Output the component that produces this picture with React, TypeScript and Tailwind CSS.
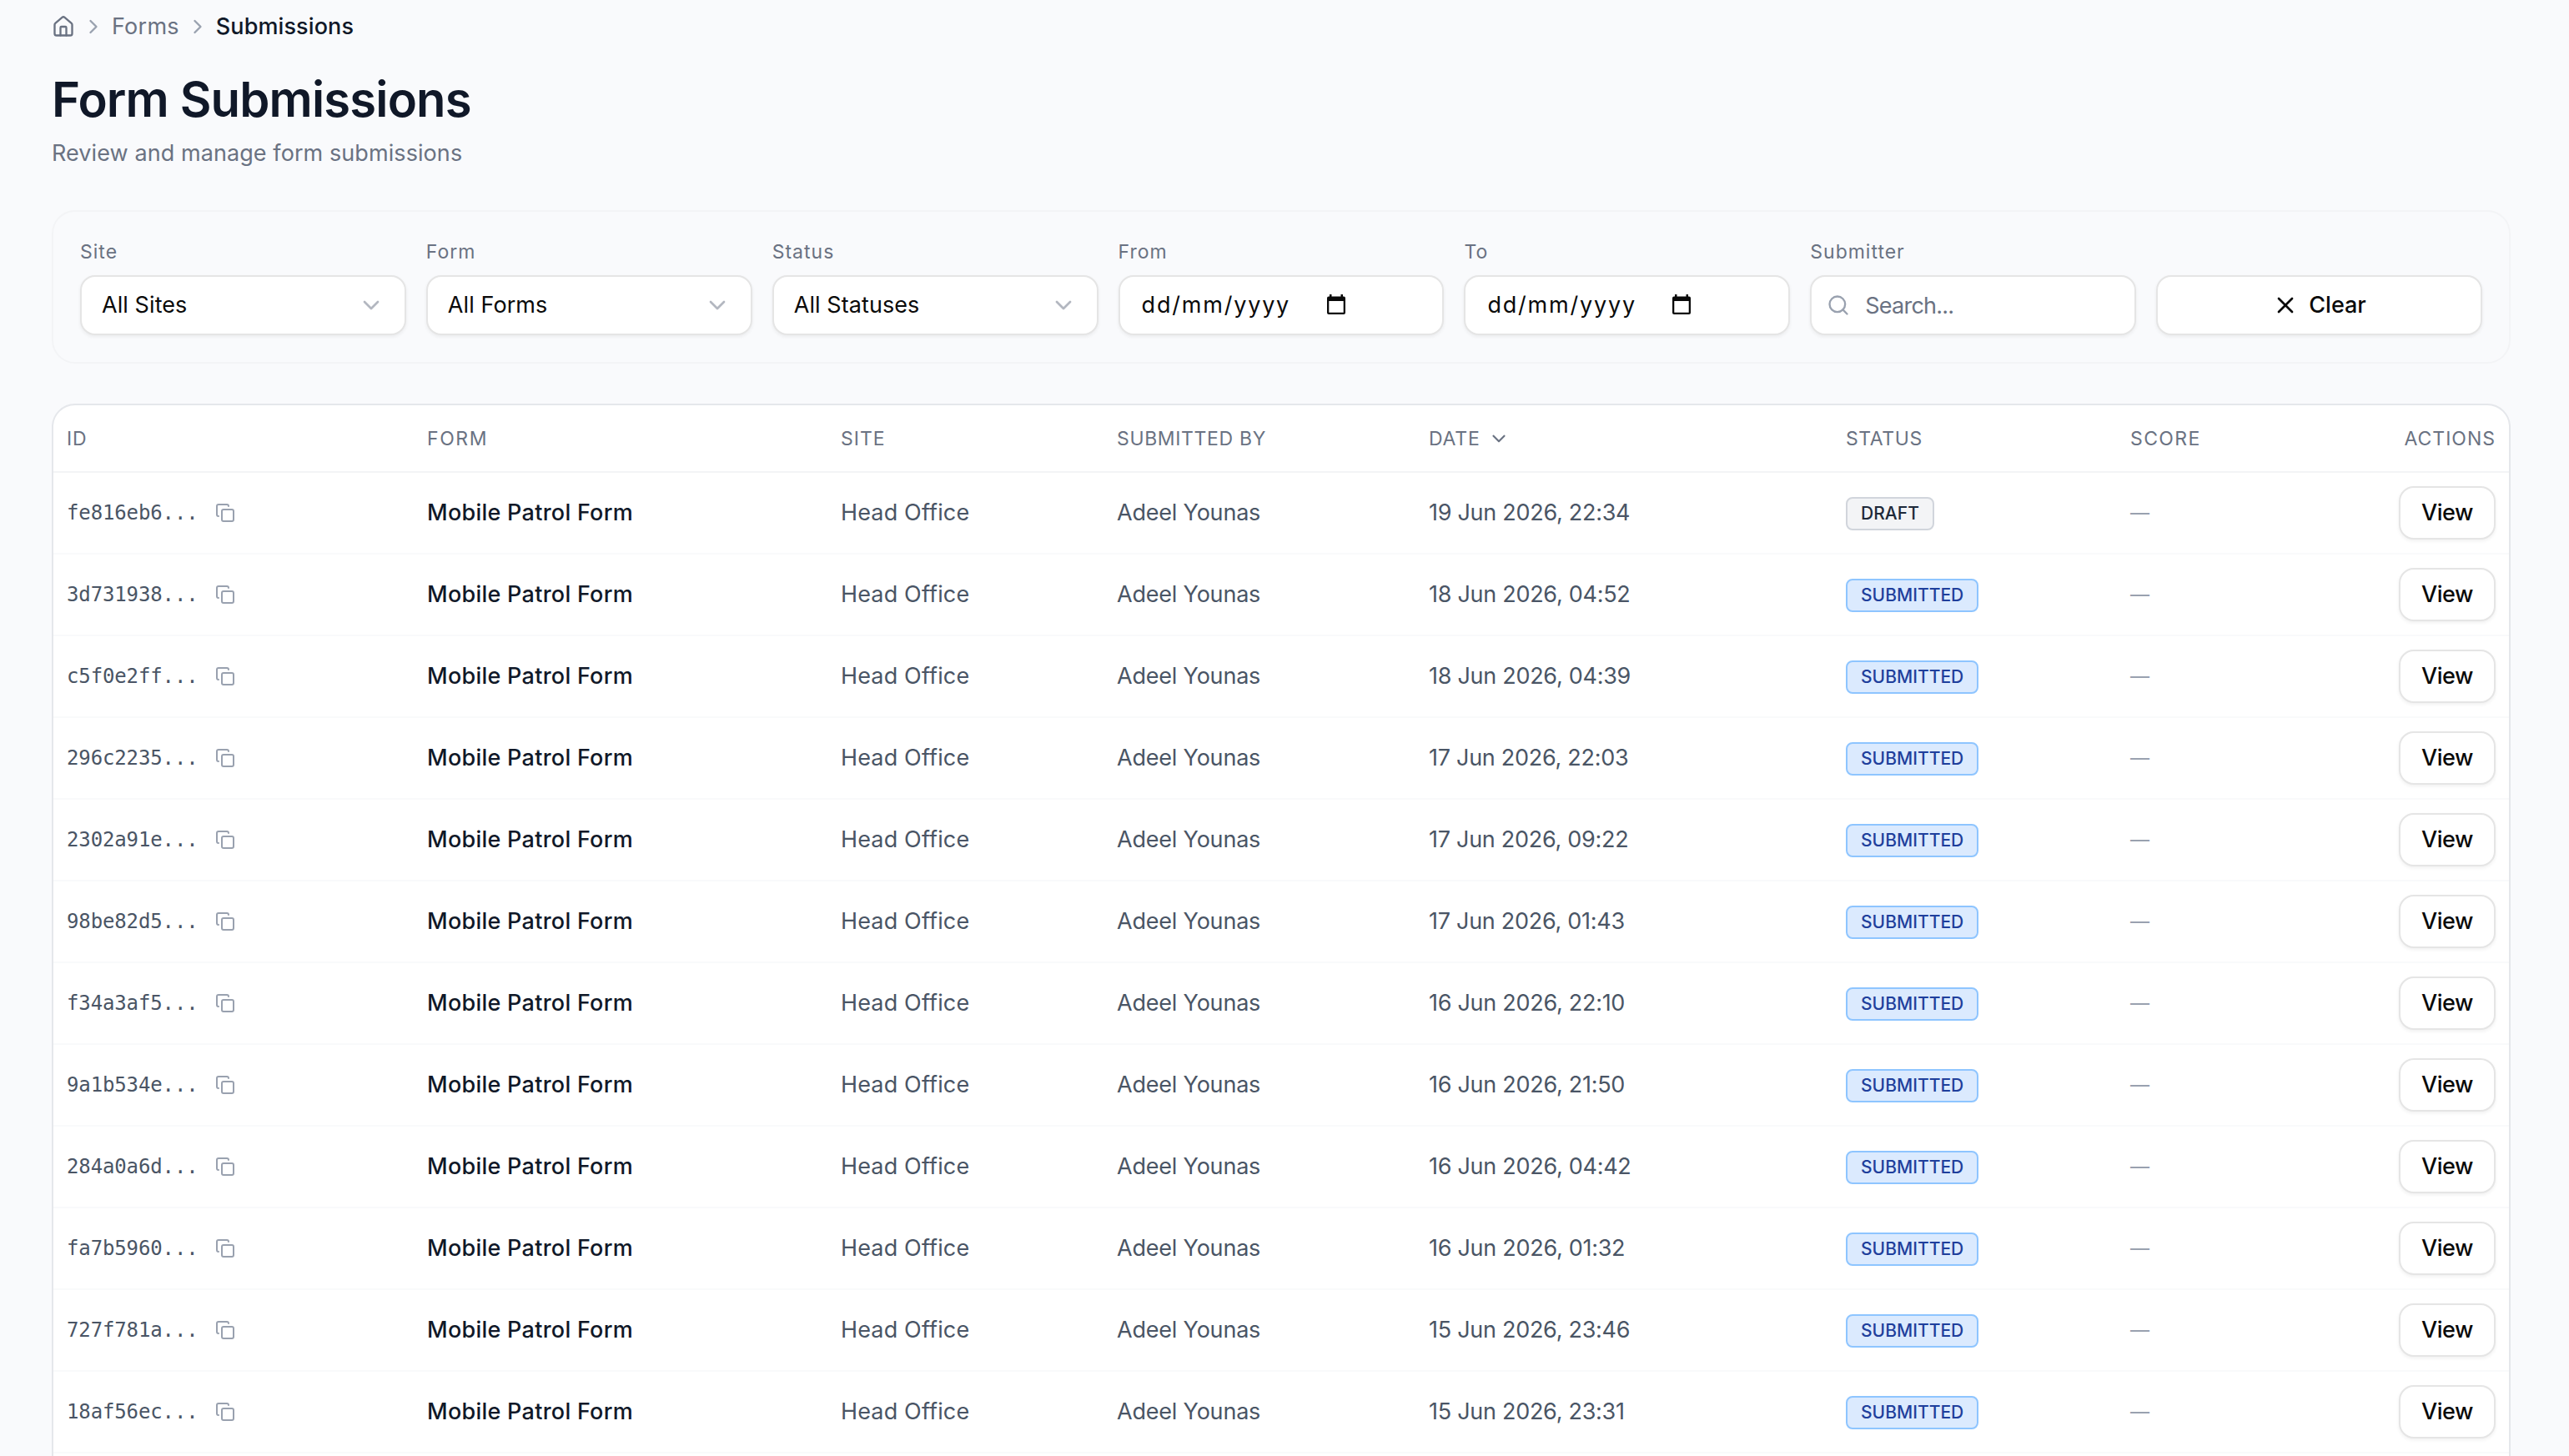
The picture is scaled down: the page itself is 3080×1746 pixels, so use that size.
import { useState } from "react";
import type { ReactNode } from "react";
import { ChevronDown, ChevronRight, Copy, House, Search, X } from "lucide-react";

type Submission = {
  id: string;
  date: string;
  status: "DRAFT" | "SUBMITTED";
};

const submissions: Submission[] = [
  { id: "fe816eb6", date: "19 Jun 2026, 22:34", status: "DRAFT" },
  { id: "3d731938", date: "18 Jun 2026, 04:52", status: "SUBMITTED" },
  { id: "c5f0e2ff", date: "18 Jun 2026, 04:39", status: "SUBMITTED" },
  { id: "296c2235", date: "17 Jun 2026, 22:03", status: "SUBMITTED" },
  { id: "2302a91e", date: "17 Jun 2026, 09:22", status: "SUBMITTED" },
  { id: "98be82d5", date: "17 Jun 2026, 01:43", status: "SUBMITTED" },
  { id: "f34a3af5", date: "16 Jun 2026, 22:10", status: "SUBMITTED" },
  { id: "9a1b534e", date: "16 Jun 2026, 21:50", status: "SUBMITTED" },
  { id: "284a0a6d", date: "16 Jun 2026, 04:42", status: "SUBMITTED" },
  { id: "fa7b5960", date: "16 Jun 2026, 01:32", status: "SUBMITTED" },
  { id: "727f781a", date: "15 Jun 2026, 23:46", status: "SUBMITTED" },
  { id: "18af56ec", date: "15 Jun 2026, 23:31", status: "SUBMITTED" },
];

const control =
  "flex h-[72px] w-full items-center rounded-[18px] border-2 border-neutral-200 bg-white text-[27px] text-neutral-950 shadow-[0_2px_4px_rgba(0,0,0,0.06)]";

function Field({ label, children }: { label: string; children: ReactNode }) {
  return (
    <div>
      <label className="mb-3 block text-[23px] leading-8 tracking-[1px] text-gray-500">{label}</label>
      {children}
    </div>
  );
}

function SelectBox({ value }: { value: string }) {
  return (
    <button type="button" className={`${control} justify-between px-6`}>
      <span className="tracking-[0.08px]">{value}</span>
      <ChevronDown size={32} className="text-gray-500 opacity-50" />
    </button>
  );
}

function DateBox() {
  return (
    <div className={`${control} px-[26px]`}>
      <span className="w-[222px] tracking-[1.8px]">dd/mm/yyyy</span>
      <svg width="22" height="24" viewBox="0 0 22 24" fill="currentColor" className="mb-0.5">
        <path d="M3 0h2.5v2.5h11V0H19v2.5h1a2 2 0 0 1 2 2V22a2 2 0 0 1-2 2H2a2 2 0 0 1-2-2V4.500a2 2 0 0 1 2-2h1zM2.300 8v13.700h17.400V8z" fillRule="evenodd" />
      </svg>
    </div>
  );
}

function StatusBadge({ status }: { status: Submission["status"] }) {
  const tone =
    status === "DRAFT" ? "border-gray-300 bg-gray-100 text-gray-800" : "border-blue-300 bg-blue-100 text-[#1f3f9c]";
  return (
    <span
      className={`mt-0.5 inline-flex h-10 items-center rounded-lg border-2 px-4 pb-px align-middle text-[21px] leading-none font-medium tracking-[0.03px] ${tone}`}
    >
      {status}
    </span>
  );
}

export default function App() {
  const [search, setSearch] = useState("");

  const th = "h-[81px] border-b-2 border-gray-100 px-4 pt-px text-left font-normal";
  const td = "h-[98px] border-b-2 border-gray-50 px-4 py-0";

  return (
    <div className="h-[1746px] w-[3080px] overflow-hidden bg-[#f9fafc] pt-[18px] pr-[70px] pl-[62px] font-['Inter','DejaVu_Sans',sans-serif]">
      <nav className="flex h-7 items-center gap-2 text-[27px] leading-7 text-gray-500">
        <House size={28} />
        <ChevronRight size={28} className="text-gray-400" />
        <span className="tracking-[0.25px]">Forms</span>
        <ChevronRight size={28} className="text-gray-400" />
        <span className="font-medium tracking-[0.1px] text-gray-900">Submissions</span>
      </nav>

      <h1 className="mt-[37px] text-[58px] leading-[72px] font-semibold tracking-[-0.85px] text-gray-900">
        Form Submissions
      </h1>
      <p className="mt-[9px] text-[27px] leading-10 tracking-[0.08px] text-gray-500">
        Review and manage form submissions
      </p>

      <section className="mt-12 grid grid-cols-7 items-end gap-6 rounded-[28px] border-2 border-gray-100 p-8">
        <Field label="Site">
          <SelectBox value="All Sites" />
        </Field>
        <Field label="Form">
          <SelectBox value="All Forms" />
        </Field>
        <Field label="Status">
          <SelectBox value="All Statuses" />
        </Field>
        <Field label="From">
          <DateBox />
        </Field>
        <Field label="To">
          <DateBox />
        </Field>
        <Field label="Submitter">
          <div className={`${control} gap-[18px] px-[18px]`}>
            <Search size={28} className="shrink-0 text-gray-400" />
            <input
              value={search}
              onChange={(e) => setSearch(e.target.value)}
              placeholder="Search..."
              className="min-w-0 flex-1 pt-0.5 tracking-[-0.77px] outline-none placeholder:text-gray-500"
            />
          </div>
        </Field>
        <button type="button" className={`${control} justify-center gap-3 font-medium`}>
          <X size={32} />
          <span>Clear</span>
        </button>
      </section>

      <section className="mt-12 h-[1400px] overflow-hidden rounded-[28px] border-2 border-gray-200 bg-white">
        <table className="w-full table-fixed border-separate border-spacing-0 text-[27px] text-gray-600">
          <colgroup>
            <col className="w-[432px]" />
            <col className="w-[496px]" />
            <col className="w-[331px]" />
            <col className="w-[374px]" />
            <col className="w-[500px]" />
            <col className="w-[341px]" />
            <col className="w-[200px]" />
            <col className="w-[270px]" />
          </colgroup>
          <thead>
            <tr className="text-[23px] text-gray-500">
              <th className={`${th} tracking-[0.8px]`}>ID</th>
              <th className={`${th} tracking-[1.6px]`}>FORM</th>
              <th className={`${th} tracking-[1px]`}>SITE</th>
              <th className={`${th} tracking-[0.65px]`}>SUBMITTED BY</th>
              <th className={`${th} tracking-[0.8px]`}>
                <span className="flex items-center gap-[9px]">
                  DATE
                  <ChevronDown size={26} />
                </span>
              </th>
              <th className={`${th} tracking-[0.6px]`}>STATUS</th>
              <th className={`${th} tracking-[1.4px]`}>SCORE</th>
              <th className={`${th} text-right tracking-[1px]`}>ACTIONS</th>
            </tr>
          </thead>
          <tbody>
            {submissions.map((s) => (
              <tr key={s.id}>
                <td className={td}>
                  <div className="flex items-center gap-5">
                    <span className="font-['DejaVu_Sans_Mono',monospace] text-[24px] leading-8 tracking-[-0.13px]">
                      {s.id}...
                    </span>
                    <Copy size={24} className="text-gray-400" />
                  </div>
                </td>
                <td className={`${td} font-medium tracking-[0.26px] text-gray-900`}>Mobile Patrol Form</td>
                <td className={`${td} tracking-[0.15px]`}>Head Office</td>
                <td className={`${td} tracking-[-0.2px]`}>Adeel Younas</td>
                <td className={`${td} tracking-[-0.28px]`}>{s.date}</td>
                <td className={td}>
                  <StatusBadge status={s.status} />
                </td>
                <td className={`${td} text-[23px] text-gray-400`}>—</td>
                <td className={`${td} text-right`}>
                  <button
                    type="button"
                    className="h-16 w-[116px] rounded-[18px] border-2 border-neutral-200 bg-white align-middle font-medium tracking-[-0.4px] text-neutral-950 shadow-[0_2px_4px_rgba(0,0,0,0.06)]"
                  >
                    View
                  </button>
                </td>
              </tr>
            ))}
          </tbody>
        </table>
      </section>
    </div>
  );
}
